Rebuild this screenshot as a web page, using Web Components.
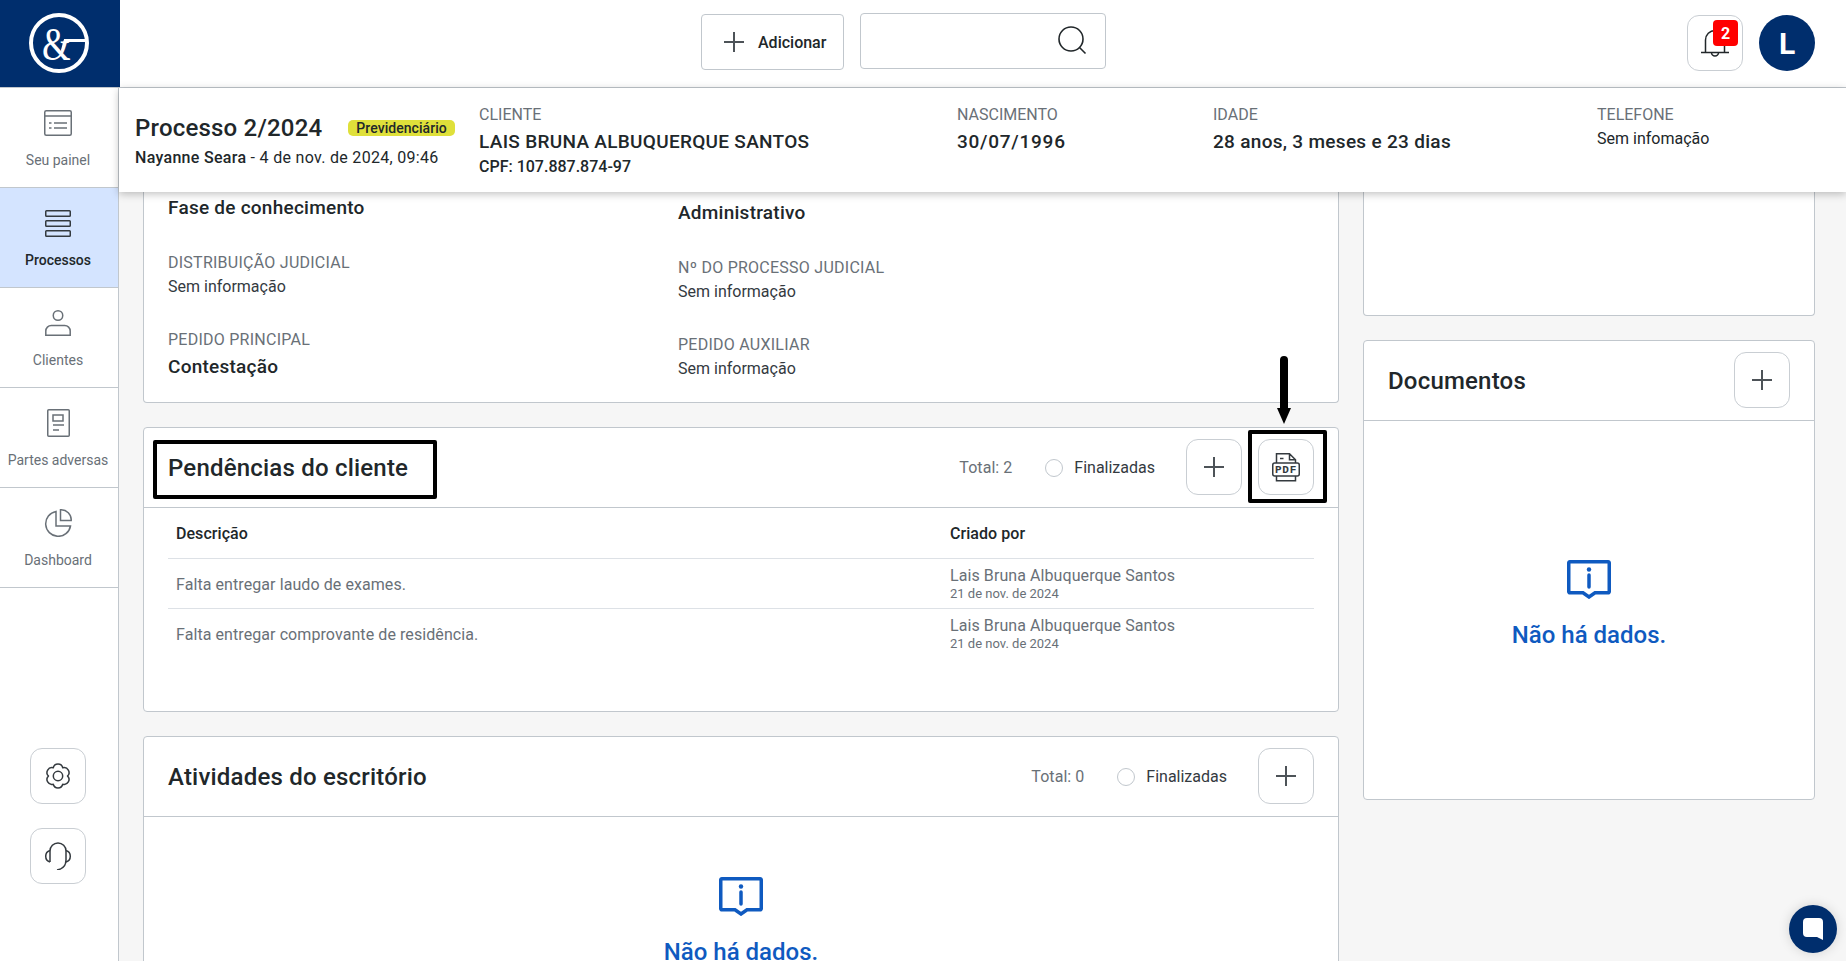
<!DOCTYPE html>
<html lang="pt-BR">
<head>
<meta charset="utf-8">
<title>Processo 2/2024</title>
<style>
  html, body { margin: 0; height: 100%; overflow: hidden; }
  body { font-family: Roboto, "Liberation Sans", sans-serif; color: #21272a; background: #f6f6f6; }
</style>
</head>
<body>
<app-shell>
  <top-bar slot="top"></top-bar>
  <side-bar slot="side"></side-bar>
  <process-bar slot="bar"></process-bar>
  <main-left slot="left"></main-left>
  <main-right slot="right"></main-right>
</app-shell>
<script>
const ICONS = {
  plus: `<svg width="20" height="20" viewBox="0 0 20 20"><path d="M10 0v20M0 10h20" stroke="#4d5358" stroke-width="2" fill="none"/></svg>`,
  search: `<svg width="30" height="30" viewBox="0 0 30 30" fill="none" stroke="#21272a" stroke-width="1.6"><circle cx="14" cy="13" r="12"/><path d="M22.5 21.5l6 6"/></svg>`,
  bell: `<svg width="28" height="28" viewBox="0 0 28 28" fill="none" stroke="#21272a" stroke-width="1.5"><path d="M0 23.5h28M4.500 23.500V11a9.500 9.500 0 0 1 19 0v12.500"/><path d="M10.500 23.500a3.500 3.500 0 0 0 7 0"/></svg>`,
  panel: `<svg width="28" height="26" viewBox="0 0 28 26" fill="none" stroke="#697077" stroke-width="1.5"><rect x=".75" y=".75" width="26.500" height="24.500" rx="1.500"/><path d="M1 6h26M10 13h13M10 18h13M5 13h2.500M5 18h2.500"/></svg>`,
  stack: `<svg width="26" height="27" viewBox="0 0 26 27" fill="none" stroke="#343a3f" stroke-width="1.500"><rect x=".75" y=".75" width="24.500" height="5.500" rx=".8"/><rect x=".75" y="10.750" width="24.500" height="5.500" rx=".8"/><rect x=".75" y="20.750" width="24.500" height="5.500" rx=".8"/></svg>`,
  user: `<svg width="26" height="26" viewBox="0 0 26 26" fill="none" stroke="#697077" stroke-width="1.500"><circle cx="13" cy="5.500" r="4.750"/><path d="M.8 25.200V21a5.500 5.500 0 0 1 5.500-5.500h13.400a5.500 5.500 0 0 1 5.500 5.500v4.200z"/></svg>`,
  doc: `<svg width="23" height="28" viewBox="0 0 23 28" fill="none" stroke="#697077" stroke-width="1.500"><rect x=".75" y=".75" width="21.500" height="26.500" rx="1"/><rect x="6" y="6" width="10" height="6"/><path d="M6 16h11M6 21h6"/></svg>`,
  pie: `<svg width="28" height="28" viewBox="0 0 28 28" fill="none" stroke="#697077" stroke-width="1.500"><path d="M12 2.500a12.500 12.500 0 1 0 14.500 14.500H12z"/><path d="M16.500.8a10 10 0 0 1 10.700 10.700H16.500z"/></svg>`,
  gear: `<svg width="28" height="28" viewBox="0 0 28 28" fill="none" stroke="#343a3f" stroke-width="1.500" stroke-linejoin="round"><path d="M18.750 5.770A4.900 4.900 0 0 1 23.500 14A4.900 4.900 0 0 1 18.750 22.230A4.900 4.900 0 0 1 9.250 22.230A4.900 4.900 0 0 1 4.500 14A4.900 4.900 0 0 1 9.250 5.770A4.900 4.900 0 0 1 18.750 5.770z"/><circle cx="14" cy="14" r="4.700"/></svg>`,
  headset: `<svg width="28" height="28" viewBox="0 0 28 28" fill="none" stroke="#343a3f" stroke-width="1.500"><path d="M6 20V9a8 8 0 0 1 16 0v9c0 5-3 9-9 10"/><path d="M6 8.500a6 6 0 0 0 0 11.500M22 8.500a6 6 0 0 1 0 11.500"/></svg>`,
  pdf: `<svg width="28" height="29" viewBox="0 0 28 29" fill="none" stroke="#343a3f" stroke-width="1.500"><path d="M4.500 10V.8h13l6 6V10M17.500 1v5.800h6"/><path d="M8 5.500h3.500"/><rect x=".75" y="10" width="26.500" height="13" rx="2"/><path d="M4.500 23v4.800h19V23"/><text x="14" y="20.300" text-anchor="middle" font-family="Liberation Mono, monospace" font-size="11" font-weight="700" fill="#343a3f" stroke="none" letter-spacing=".8">PDF</text></svg>`,
  info: `<svg width="44" height="39" viewBox="0 0 44 39" fill="none" stroke="#0f5ac0" stroke-width="3.500"><path d="M3 1.750h38a1.200 1.200 0 0 1 1.250 1.250v28.500a1.200 1.200 0 0 1-1.250 1.250H28L22 37l-6-4.250H3a1.200 1.200 0 0 1-1.250-1.250V3A1.200 1.200 0 0 1 3 1.750z"/><path d="M22 15v12" stroke-linecap="round"/><circle cx="22" cy="9.500" r="2.200" fill="#0f5ac0" stroke="none"/></svg>`
};

class AppShell extends HTMLElement {
  constructor() {
    super();
    this.attachShadow({mode: "open"}).innerHTML = `
    <style>
      :host { display: grid; grid-template-columns: 119px 1fr; grid-template-rows: 88px 1fr; width: 1846px; height: 961px; position: relative; overflow: hidden; }
      .top { grid-column: 1 / 3; }
      .main { display: flex; flex-direction: column; min-height: 0; position: relative; }
      .scroll { flex: 1; min-height: 0; overflow: hidden; display: grid; grid-template-columns: 1196px 452px; gap: 24px; padding: 0 31px 0 24px; align-items: start; }
      .box { position: absolute; border: 4px solid #000; border-radius: 2px; box-sizing: border-box; }
      .arrow { position: absolute; left: 1276px; top: 356px; }
      .chat { position: absolute; left: 1789px; top: 905px; width: 48px; height: 48px; border-radius: 50%; background: #002e6d; display: flex; align-items: center; justify-content: center; box-shadow: 0 0 12px rgba(0,0,0,.15); }
    </style>
    <div class="top"><slot name="top"></slot></div>
    <slot name="side"></slot>
    <div class="main">
      <slot name="bar"></slot>
      <div class="scroll">
        <slot name="left"></slot>
        <slot name="right"></slot>
      </div>
    </div>
    <div class="box" style="left:153px;top:440px;width:284px;height:59px"></div>
    <div class="box" style="left:1248px;top:430px;width:79px;height:73px"></div>
    <svg class="arrow" width="16" height="68" viewBox="0 0 16 68"><path d="M4 4a4 4 0 0 1 8 0v48h3L8 68 1 52h3z" fill="#000"/></svg>
    <div class="chat"><svg width="22" height="24" viewBox="0 0 22 24"><path d="M5 1h12a4 4 0 0 1 4 4v18l-6-3H5a4 4 0 0 1-4-4V5a4 4 0 0 1 4-4z" fill="#fff"/></svg></div>
    `;
  }
}

class IconButton extends HTMLElement {
  constructor() {
    super();
    this.attachShadow({mode: "open"}).innerHTML = `
    <style>
      :host { display: flex; align-items: center; justify-content: center; position: relative; width: 56px; height: 56px; box-sizing: border-box; border: 1px solid #c9ced3; border-radius: 12px; background: #fff; flex: none; }
    </style>
    <slot></slot>
    `;
  }
  connectedCallback() {
    const name = this.getAttribute("icon");
    if (name && !this.querySelector("svg")) this.insertAdjacentHTML("afterbegin", ICONS[name]);
  }
}

class TopBar extends HTMLElement {
  constructor() {
    super();
    this.attachShadow({mode: "open"}).innerHTML = `
    <style>
      :host { display: flex; height: 88px; box-sizing: border-box; border-bottom: 1px solid #c1c7cd; background: #fff; }
      .logo { width: 120px; height: 87px; box-sizing: border-box; padding: 0 3px 1px 0; background: #002e6d; display: flex; align-items: center; justify-content: center; flex: none; }
      .center { display: flex; align-items: flex-start; gap: 16px; margin-left: 581px; padding-top: 13px; }
      .add { display: flex; align-items: center; gap: 14px; width: 143px; height: 56px; box-sizing: border-box; border: 1px solid #c1c7cd; border-radius: 4px; padding-left: 22px; font-size: 16px; font-weight: 500; margin-top: 1px; }
      .search { width: 246px; height: 56px; box-sizing: border-box; border: 1px solid #c1c7cd; border-radius: 4px; display: flex; align-items: center; justify-content: flex-end; padding-right: 18px; }
      .right { margin-left: auto; display: flex; gap: 16px; padding: 15px 31px 0 0; }
      .badge { position: absolute; left: 25px; top: 4px; width: 25px; height: 26px; background: #f00; border-radius: 4px; color: #fff; font-size: 16px; font-weight: 700; display: flex; align-items: center; justify-content: center; }
      .avatar { width: 56px; height: 56px; border-radius: 50%; background: #002e6d; color: #fff; font-size: 30px; font-weight: 700; display: flex; align-items: center; justify-content: center; }
    </style>
    <div class="logo">
      <svg width="60" height="60" viewBox="0 0 60 60" fill="none" stroke="#fff">
        <circle cx="30" cy="30" r="28" stroke-width="4"/>
        <path d="M35 27.500h22" stroke-width="3"/>
        <path d="M36 27l-3 11" stroke-width="2.500"/>
        <text transform="translate(13 47) scale(.8 1)" font-family="Liberation Serif, serif" font-size="46" fill="#fff" stroke="none">&amp;</text>
      </svg>
    </div>
    <div class="center">
      <div class="add">${ICONS.plus}<span>Adicionar</span></div>
      <div class="search">${ICONS.search}</div>
    </div>
    <div class="right">
      <icon-button icon="bell"><div class="badge">2</div></icon-button>
      <div class="avatar">L</div>
    </div>
    `;
  }
}

class NavItem extends HTMLElement {
  constructor() {
    super();
    this.attachShadow({mode: "open"});
  }
  connectedCallback() {
    const active = this.hasAttribute("active");
    this.shadowRoot.innerHTML = `
    <style>
      :host { display: flex; flex-direction: column; align-items: center; height: 100px; box-sizing: border-box; padding-right: 2px; border-bottom: 1px solid #c1c7cd; background: ${active ? "#d4e4ff" : "#fff"}; }
      .ic { height: 28px; margin-top: 21px; display: flex; align-items: center; justify-content: center; }
      .t { margin-top: 14px; font-size: 14px; line-height: 18px; color: ${active ? "#21272a" : "#697077"}; font-weight: ${active ? 500 : 400}; }
    </style>
    <div class="ic">${ICONS[this.getAttribute("icon")]}</div>
    <div class="t">${this.getAttribute("label")}</div>
    `;
  }
}

class SideBar extends HTMLElement {
  constructor() {
    super();
    this.attachShadow({mode: "open"}).innerHTML = `
    <style>
      :host { display: flex; flex-direction: column; background: #fff; border-right: 1px solid #c1c7cd; min-height: 0; }
      .bottom { margin-top: auto; padding: 0 2px 77px 0; display: flex; flex-direction: column; align-items: center; gap: 24px; }
    </style>
    <nav-item icon="panel" label="Seu painel"></nav-item>
    <nav-item icon="stack" label="Processos" active></nav-item>
    <nav-item icon="user" label="Clientes"></nav-item>
    <nav-item icon="doc" label="Partes adversas"></nav-item>
    <nav-item icon="pie" label="Dashboard"></nav-item>
    <div class="bottom">
      <icon-button icon="gear"></icon-button>
      <icon-button icon="headset"></icon-button>
    </div>
    `;
  }
}

class ProcessBar extends HTMLElement {
  constructor() {
    super();
    this.attachShadow({mode: "open"}).innerHTML = `
    <style>
      :host { display: grid; grid-template-columns: 344px 478px 256px 384px 1fr; height: 104px; box-sizing: border-box; padding: 17px 0 0 16px; background: #fff; box-shadow: 0 2px 8px rgba(0,0,0,.25); position: relative; z-index: 2; flex: none; }
      .title { display: flex; align-items: center; gap: 26px; height: 36px; margin-top: 5px; }
      h1 { margin: 0; font-size: 24px; font-weight: 500; line-height: 36px; letter-spacing: .2px; }
      .tag { background: #dfe03a; border-radius: 5px; font-size: 14px; font-weight: 500; line-height: 16px; padding: 0 8px; margin-top: 0; letter-spacing: .05px; }
      .sub { font-size: 16px; line-height: 22px; margin-top: 1px; letter-spacing: .3px; }
      .sub b { font-weight: 500; }
      .l { font-size: 16px; line-height: 20px; color: #697077; }
      .v { font-size: 19px; font-weight: 500; line-height: 24px; margin-top: 5px; letter-spacing: .3px; }
      .v.num { letter-spacing: .75px; }
      .s { font-size: 16px; line-height: 22px; margin-top: 3px; }
      .c { font-size: 16px; font-weight: 500; line-height: 22px; margin-top: 2px; }
    </style>
    <div>
      <div class="title"><h1>Processo 2/2024</h1><span class="tag">Previdenciário</span></div>
      <div class="sub"><b>Nayanne Seara</b> - 4 de nov. de 2024, 09:46</div>
    </div>
    <div><div class="l">CLIENTE</div><div class="v">LAIS BRUNA ALBUQUERQUE SANTOS</div><div class="c">CPF: 107.887.874-97</div></div>
    <div><div class="l">NASCIMENTO</div><div class="v num">30/07/1996</div></div>
    <div><div class="l">IDADE</div><div class="v">28 anos, 3 meses e 23 dias</div></div>
    <div><div class="l">TELEFONE</div><div class="s">Sem infomação</div></div>
    `;
  }
}

class PanelCard extends HTMLElement {
  constructor() {
    super();
    this.attachShadow({mode: "open"});
  }
  connectedCallback() {
    const finalizadas = this.hasAttribute("total");
    this.shadowRoot.innerHTML = `
    <style>
      :host { display: block; box-sizing: border-box; background: #fff; border: 1px solid #c1c7cd; border-radius: 4px; }
      header { display: flex; align-items: center; height: 80px; box-sizing: border-box; border-bottom: 1px solid #c1c7cd; padding: 0 24px; gap: 8px; }
      h2 { margin: 0; font-size: 24px; font-weight: 500; flex: 1; letter-spacing: .2px; }
      .total { font-size: 16px; color: #697077; margin-right: 25px; letter-spacing: .05px; }
      .radio { width: 18px; height: 18px; box-sizing: border-box; border: 1px solid #c1c7cd; border-radius: 50%; margin-right: 3px; }
      .fin { font-size: 16px; color: #343a3f; margin-right: 23px; }
      .actions { display: flex; gap: 16px; margin-top: -1px; }
    </style>
    <header>
      <h2>${this.getAttribute("heading")}</h2>
      ${finalizadas ? `<span class="total">Total: ${this.getAttribute("total")}</span><span class="radio"></span><span class="fin">Finalizadas</span>` : ""}
      <div class="actions"><icon-button icon="plus"></icon-button><slot name="action"></slot></div>
    </header>
    <slot></slot>
    `;
  }
}

class EmptyState extends HTMLElement {
  constructor() {
    super();
    this.attachShadow({mode: "open"}).innerHTML = `
    <style>
      :host { display: flex; flex-direction: column; align-items: center; color: #0f5ac0; }
      .t { font-size: 24px; font-weight: 500; line-height: 22px; margin-top: 25px; }
    </style>
    ${ICONS.info}
    <div class="t">Não há dados.</div>
    `;
  }
}

class InfoField extends HTMLElement {
  constructor() {
    super();
    this.attachShadow({mode: "open"});
  }
  connectedCallback() {
    this.shadowRoot.innerHTML = `
    <style>
      :host { display: block; margin-bottom: 29px; }
      .l { font-size: 16px; line-height: 24px; color: #697077; letter-spacing: .25px; }
      .v { font-size: 16px; line-height: 24px; color: #343a3f; }
      :host([strong]) .v { font-size: 19px; font-weight: 500; color: #21272a; line-height: 30px; letter-spacing: .25px; }
    </style>
    ${this.hasAttribute("label") ? `<div class="l">${this.getAttribute("label")}</div>` : ""}
    <div class="v">${this.getAttribute("value")}</div>
    `;
  }
}

class PendingTable extends HTMLElement {
  constructor() {
    super();
    this.attachShadow({mode: "open"});
  }
  connectedCallback() {
    const rows = [
      ["Falta entregar laudo de exames.", "Lais Bruna Albuquerque Santos", "21 de nov. de 2024"],
      ["Falta entregar comprovante de residência.", "Lais Bruna Albuquerque Santos", "21 de nov. de 2024"]
    ];
    this.shadowRoot.innerHTML = `
    <style>
      :host { display: block; padding: 0 24px; height: 203px; box-sizing: border-box; }
      .row { display: grid; grid-template-columns: 774px 1fr; align-items: center; height: 50px; box-sizing: border-box; padding: 0 8px; border-bottom: 1px solid #dde1e6; }
      .head { height: 51px; font-size: 16px; font-weight: 500; letter-spacing: .05px; }
      .head + .row { padding-top: 1px; }
      .d { font-size: 16px; color: #697077; letter-spacing: .08px; }
      .n { font-size: 16px; line-height: 18px; color: #697077; letter-spacing: .08px; }
      .w { font-size: 13px; line-height: 14px; margin-top: 2px; color: #697077; }
      .row:last-child { border-bottom: 0; }
    </style>
    <div class="row head"><div>Descrição</div><div>Criado por</div></div>
    ${rows.map(r => `<div class="row"><div class="d">${r[0]}</div><div><div class="n">${r[1]}</div><div class="w">${r[2]}</div></div></div>`).join("")}
    `;
  }
}

class MainLeft extends HTMLElement {
  constructor() {
    super();
    this.attachShadow({mode: "open"}).innerHTML = `
    <style>
      :host { display: flex; flex-direction: column; gap: 24px; }
      .info { height: 211px; box-sizing: border-box; background: #fff; border: 1px solid #c1c7cd; border-top: 0; border-radius: 0 0 4px 4px; display: grid; grid-template-columns: 510px 1fr; padding: 0 24px; }
      .c1 { padding-top: 1px; }
      .c2 { padding-top: 6px; }
      panel-card.act { height: 400px; }
      empty-state { padding-top: 60px; }
    </style>
    <div class="info">
      <div class="c1">
        <info-field strong value="Fase de conhecimento" style="margin-bottom:28px"></info-field>
        <info-field label="DISTRIBUIÇÃO JUDICIAL" value="Sem informação"></info-field>
        <info-field strong label="PEDIDO PRINCIPAL" value="Contestação"></info-field>
      </div>
      <div class="c2">
        <info-field strong value="Administrativo" style="margin-bottom:28px"></info-field>
        <info-field label="Nº DO PROCESSO JUDICIAL" value="Sem informação"></info-field>
        <info-field label="PEDIDO AUXILIAR" value="Sem informação"></info-field>
      </div>
    </div>
    <panel-card heading="Pendências do cliente" total="2">
      <icon-button slot="action" icon="pdf"></icon-button>
      <pending-table></pending-table>
    </panel-card>
    <panel-card class="act" heading="Atividades do escritório" total="0">
      <empty-state></empty-state>
    </panel-card>
    `;
  }
}

class MainRight extends HTMLElement {
  constructor() {
    super();
    this.attachShadow({mode: "open"}).innerHTML = `
    <style>
      :host { display: flex; flex-direction: column; gap: 24px; }
      .stub { height: 124px; box-sizing: border-box; background: #fff; border: 1px solid #c1c7cd; border-top: 0; border-radius: 0 0 4px 4px; }
      empty-state { height: 378px; box-sizing: border-box; padding-top: 139px; }
    </style>
    <div class="stub"></div>
    <panel-card heading="Documentos"><empty-state></empty-state></panel-card>
    `;
  }
}

customElements.define("icon-button", IconButton);
customElements.define("nav-item", NavItem);
customElements.define("panel-card", PanelCard);
customElements.define("empty-state", EmptyState);
customElements.define("info-field", InfoField);
customElements.define("pending-table", PendingTable);
customElements.define("top-bar", TopBar);
customElements.define("side-bar", SideBar);
customElements.define("process-bar", ProcessBar);
customElements.define("main-left", MainLeft);
customElements.define("main-right", MainRight);
customElements.define("app-shell", AppShell);
</script>
</body>
</html>
